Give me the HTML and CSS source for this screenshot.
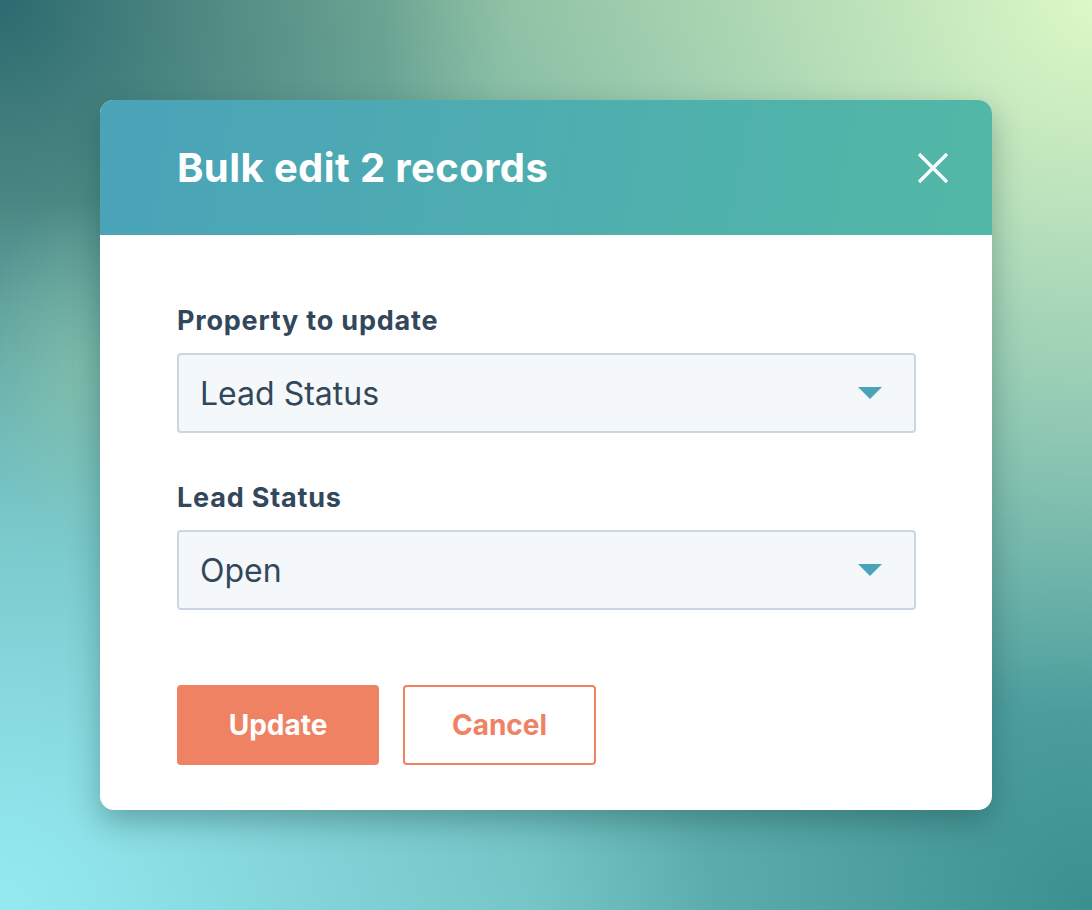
FILE: index.html
```html
<!DOCTYPE html>
<html lang="en">
<head>
  <meta charset="UTF-8">
  <meta name="viewport" content="width=device-width, initial-scale=1.0">
  <title>Bulk edit</title>
  <link rel="stylesheet" href="styles.css">
</head>
<body>

<div class="modal">
  <div class="modal-header">
    <h1>Bulk edit 2 records</h1>
    <button class="close" aria-label="Close">
      <svg width="32" height="32" viewBox="0 0 32 32">
        <path d="M2 2 L30 30 M30 2 L2 30" stroke="#fff" stroke-width="3.2" fill="none"/>
      </svg>
    </button>
  </div>

  <div class="modal-body">
    <div class="field">
      <label>Property to update</label>
      <div class="select">
        <span>Lead Status</span>
        <span class="caret"></span>
      </div>
    </div>

    <div class="field">
      <label>Lead Status</label>
      <div class="select">
        <span>Open</span>
        <span class="caret"></span>
      </div>
    </div>

    <div class="actions">
      <button class="btn primary">Update</button>
      <button class="btn secondary">Cancel</button>
    </div>
  </div>
</div>

</body>
</html>
```

FILE: styles.css
```css
html, body {
  height: 100%;
}

body {
  margin: 0;
  padding: 100px 100px 0 100px;
  box-sizing: border-box;
  font-family: Inter, "Noto Sans", sans-serif;
  color: #33475b;
  background:
    radial-gradient(ellipse 100px 170px at 80px 370px, rgba(150, 205, 170, 0.45), rgba(150, 205, 170, 0) 100%),
    radial-gradient(circle at 100% 0%, #dcf8c6 0, rgba(220, 248, 198, 0) 50%),
    radial-gradient(circle at 0% 100%, #95eaf2 0, rgba(149, 234, 242, 0) 50%),
    radial-gradient(circle at 100% 100%, #3b8f8f 0, rgba(59, 143, 143, 0) 40%),
    radial-gradient(circle at 0% 0%, #2c6a70 0, rgba(44, 106, 112, 0) 36%),
    linear-gradient(170deg, #86b99c, #62aaa6 45%, #6dbdbe);
}

.modal {
  width: 892px;
  background: #fff;
  border-radius: 14px;
  overflow: hidden;
  box-shadow: 0 12px 30px rgba(20, 60, 60, 0.35);
}

.modal-header {
  height: 135px;
  padding: 0 43px 0 77px;
  display: flex;
  align-items: center;
  justify-content: space-between;
  background: linear-gradient(100deg, #4aa3b9, #52b8a6);
}

h1 {
  margin: 0;
  color: #fff;
  font-size: 40px;
  font-weight: 700;
  letter-spacing: 0.4px;
}

.close {
  background: none;
  border: none;
  padding: 0;
  width: 32px;
  height: 32px;
  cursor: pointer;
}

.modal-body {
  padding: 70px 76px 45px 77px;
}

.field {
  margin-bottom: 49px;
}

.field label {
  display: block;
  font-size: 27px;
  font-weight: 700;
  line-height: 32px;
  letter-spacing: 0.8px;
  margin-bottom: 16px;
}

.select {
  height: 80px;
  box-sizing: border-box;
  padding: 0 32px 0 21px;
  display: flex;
  align-items: center;
  justify-content: space-between;
  background: #f5f8fa;
  border: 2px solid #cbd6e2;
  border-radius: 4px;
  font-size: 32px;
}

.caret {
  width: 0;
  height: 0;
  border-left: 12px solid transparent;
  border-right: 12px solid transparent;
  border-top: 12px solid #4ba3ba;
}

.actions {
  display: flex;
  gap: 24px;
  margin-top: 75px;
}

.btn {
  height: 80px;
  border-radius: 4px;
  font-family: Inter, "Noto Sans", sans-serif;
  font-size: 28px;
  font-weight: 700;
  cursor: pointer;
}

.primary {
  width: 202px;
  background: #ef8263;
  border: none;
  color: #fff;
}

.secondary {
  width: 193px;
  background: #fff;
  border: 2px solid #ef8263;
  color: #ef8263;
}
```
